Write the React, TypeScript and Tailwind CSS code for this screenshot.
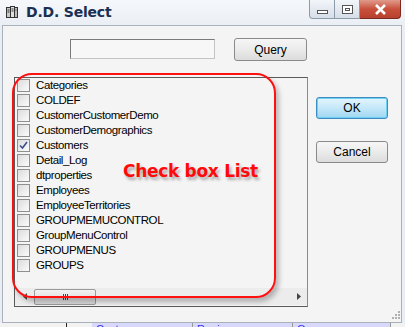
import React from 'react';

const items = [
  'Categories',
  'COLDEF',
  'CustomerCustomerDemo',
  'CustomerDemographics',
  'Customers',
  'Detail_Log',
  'dtproperties',
  'Employees',
  'EmployeeTerritories',
  'GROUPMEMUCONTROL',
  'GroupMenuControl',
  'GROUPMENUS',
  'GROUPS',
];

const CheckBox = ({ checked }: { checked: boolean }) => (
  <div className="w-[13px] h-[13px] border border-[#8e8f8f] bg-gradient-to-br from-[#dcdcdc] to-[#fbfbfb] flex items-center justify-center shrink-0">
    {checked && (
      <svg width="9" height="9" viewBox="0 0 9 9">
        <path d="M1 4.5 L3.5 7 L8 1" stroke="#3a4f8e" strokeWidth="1.6" fill="none" />
      </svg>
    )}
  </div>
);

const App = () => {
  return (
    <div className="w-[405px] h-[327px] overflow-hidden bg-[#e9eef5] relative font-['Liberation_Sans',sans-serif] text-[11px] text-black">
      {/* title bar */}
      <div className="h-[25px] flex items-start bg-gradient-to-b from-[#f6f8fb] to-[#eaeff5]">
        <div className="flex items-center h-[25px] pl-[6px] gap-[8px]">
          <svg width="12" height="13" viewBox="0 0 12 13">
            <rect x="0.5" y="1.5" width="4" height="10" fill="#c9c9c9" stroke="#333" />
            <rect x="4.5" y="0.5" width="4" height="11" fill="#e0e0e0" stroke="#333" />
            <rect x="8.5" y="1.5" width="3" height="10" fill="#bdbdbd" stroke="#333" />
            <path d="M1.5 4h2M1.5 6h2M5.5 3h2M5.5 5h2M9.5 4h1" stroke="#333" />
          </svg>
          <span className="font-bold text-[14px] text-[#1b2f52] font-['DejaVu_Sans',sans-serif] tracking-[-0.2px]">D.D. Select</span>
        </div>
        <div className="ml-auto mr-[4px] flex h-[19px] mt-0">
          <div className="w-[26px] h-[19px] border border-[#8d9aaa] border-t-0 rounded-bl-[4px] bg-gradient-to-b from-[#f2f5f9] to-[#d7dee8] flex items-center justify-center">
            <div className="w-[11px] h-[4px] border border-[#555] bg-white mt-[5px]" />
          </div>
          <div className="w-[25px] h-[19px] border border-l-0 border-[#8d9aaa] border-t-0 bg-gradient-to-b from-[#f2f5f9] to-[#d7dee8] flex items-center justify-center">
            <div className="w-[11px] h-[9px] border border-[#555] bg-white flex items-center justify-center">
              <div className="w-[5px] h-[3px] border border-[#555]" />
            </div>
          </div>
          <div className="w-[41px] h-[19px] border border-l-0 border-[#7a2a1e] border-t-0 rounded-br-[4px] bg-gradient-to-b from-[#e09a8c] via-[#c8503c] to-[#b8402e] flex items-center justify-center">
            <svg width="13" height="11" viewBox="0 0 13 11">
              <path d="M2 1 L11 10 M11 1 L2 10" stroke="#fff" strokeWidth="2.6" />
            </svg>
          </div>
        </div>
      </div>

      {/* client area */}
      <div className="ml-[2px] mr-[3px] h-[298px] border border-[#a9b1bb] bg-[#f4f4f4] relative">
        <div className="flex mt-[12px] items-start">
          <div className="ml-[67px] mt-[1px] w-[145px] h-[20px] border border-[#7a7a7a] border-r-[#c4c4c4] border-b-[#c4c4c4] bg-[#f7f7f7]" />
          <button className="ml-[19px] w-[73px] h-[23px] border border-[#8a8a8a] rounded-[3px] bg-gradient-to-b from-[#f6f6f6] via-[#ebebeb] to-[#dcdcdc] text-[12px] leading-none">
            Query
          </button>
        </div>

        <div className="flex mt-[16px] items-start">
          <div className="ml-[11px] w-[294px] h-[230px] border border-[#5a5a5a] border-r-[#8a8a8a] bg-[#f4f4f4] relative overflow-hidden">
            <div className="pl-[2px] flex flex-col">
              {items.map((it, i) => (
                <div key={it} className="h-[15px] flex items-center gap-[6px]">
                  <CheckBox checked={i === 4} />
                  <span className="text-[11.5px] leading-none tracking-[-0.4px] whitespace-nowrap">{it}</span>
                </div>
              ))}
            </div>
            <div className="absolute left-0 right-0 bottom-[1px] h-[17px] bg-[#ececec] flex items-center">
              <svg className="ml-[8px]" width="5" height="7" viewBox="0 0 5 7">
                <path d="M4 0 L0 3.5 L4 7Z" fill="#444" />
              </svg>
              <div className="ml-[6px] w-[62px] h-[16px] border border-[#9a9a9a] rounded-[2px] bg-gradient-to-b from-[#f2f2f2] to-[#d8d8d8] flex items-center justify-center">
                <div className="flex gap-[1px]">
                  <div className="w-[1px] h-[6px] bg-[#444]" />
                  <div className="w-[1px] h-[6px] bg-[#444]" />
                  <div className="w-[1px] h-[6px] bg-[#444]" />
                </div>
              </div>
              <svg className="ml-auto mr-[6px]" width="5" height="7" viewBox="0 0 5 7">
                <path d="M1 0 L5 3.5 L1 7Z" fill="#444" />
              </svg>
            </div>
          </div>

          <div className="ml-[8px] mt-[20px] flex flex-col gap-[22px]">
            <button className="w-[72px] h-[22px] border border-[#3c8cc0] rounded-[3px] bg-gradient-to-b from-[#e4f5fd] via-[#c4e8f9] to-[#9fd6f2] text-[12px] leading-none shadow-[inset_0_0_0_1px_#6fd0f6]">
              OK
            </button>
            <button className="w-[72px] h-[22px] border border-[#8a8a8a] rounded-[3px] bg-gradient-to-b from-[#f6f6f6] via-[#ebebeb] to-[#dcdcdc] text-[12px] leading-none">
              Cancel
            </button>
          </div>
        </div>

        {/* resize grip */}
        <svg className="absolute right-[1px] bottom-[1px]" width="10" height="10" viewBox="0 0 10 10">
          <g fill="#b0b0b0">
            <rect x="8" y="0" width="2" height="2" />
            <rect x="5" y="3" width="2" height="2" />
            <rect x="8" y="3" width="2" height="2" />
            <rect x="2" y="6" width="2" height="2" />
            <rect x="5" y="6" width="2" height="2" />
            <rect x="8" y="6" width="2" height="2" />
          </g>
        </svg>

        {/* annotation */}
        <div className="absolute left-[9px] top-[47px] w-[264px] h-[225px] border-2 border-[#ff1010] rounded-[20px] shadow-[3px_4px_5px_rgba(0,0,0,0.25)]" />
        <div className="absolute left-[120px] top-[133px] text-[#ff0a0a] font-bold text-[17px] font-['DejaVu_Sans',sans-serif] tracking-[-0.3px] [text-shadow:2px_3px_3px_rgba(0,0,0,0.3)]">
          Check box List
        </div>
      </div>

      {/* app behind */}
      <div className="h-[4px] flex bg-[#f2f2f2] text-[#3333ee] text-[11px] leading-[12px] overflow-hidden">
        <div className="w-[66px]" />
        <div className="w-[1px] bg-[#222]" />
        <div className="w-[25px]" />
        <div className="w-[100px] bg-[#d8d8fa] pl-[4px]">Customers</div>
        <div className="w-[1px] bg-[#999]" />
        <div className="w-[99px] bg-[#d8d8fa] pl-[4px]">Region</div>
        <div className="w-[1px] bg-[#999]" />
        <div className="w-[97px] bg-[#d8d8fa] pl-[4px]">Owner</div>
        <div className="w-[1px] bg-[#999]" />
      </div>
    </div>
  );
};

export default App;
